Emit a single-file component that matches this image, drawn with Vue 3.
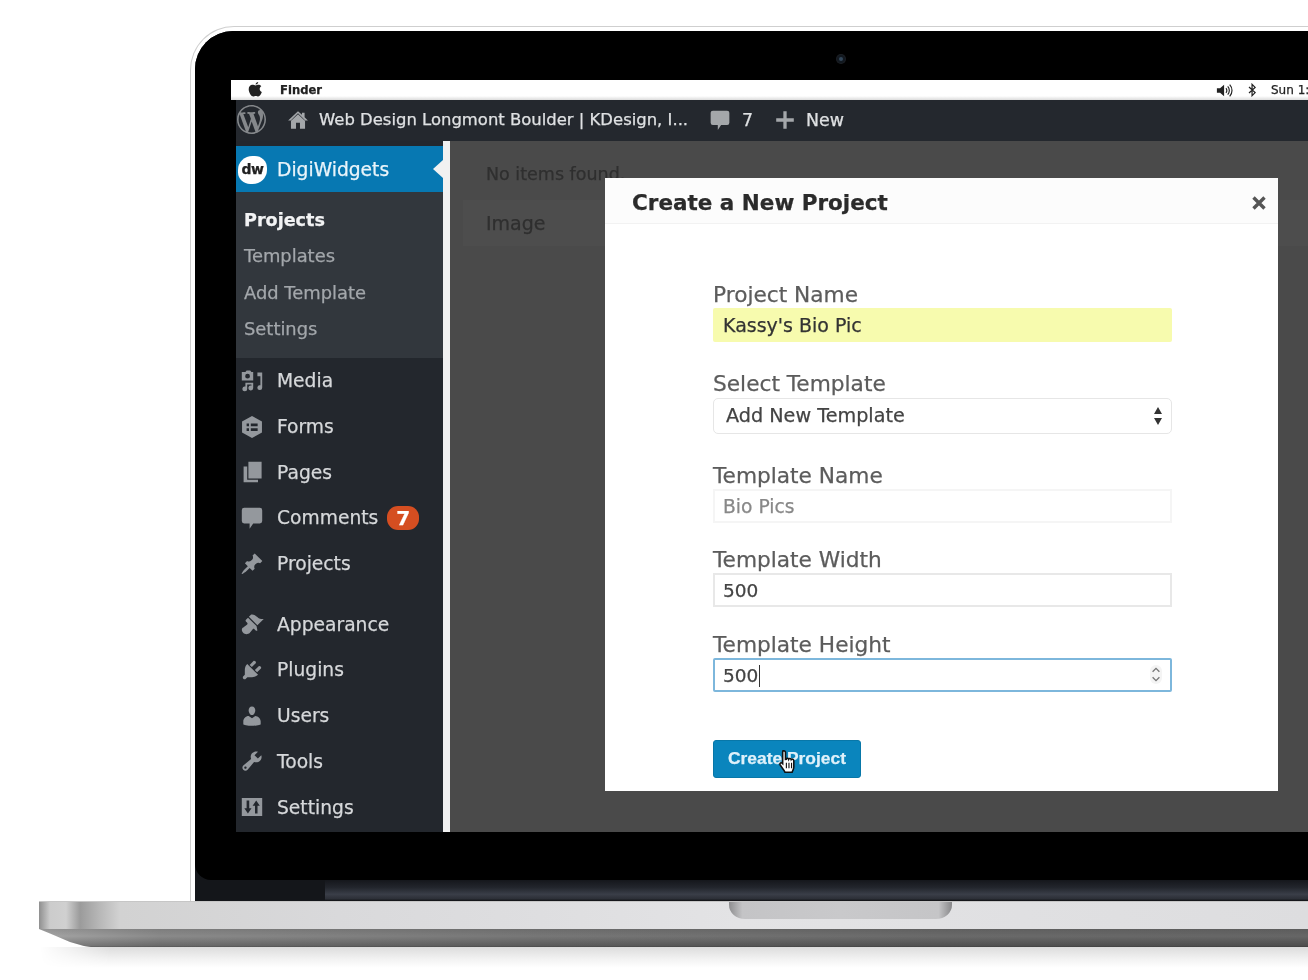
<script setup>
const adminIcons = {
  wp: 'M20 10c0-5.51-4.49-10-10-10C4.48 0 0 4.49 0 10c0 5.52 4.48 10 10 10 5.51 0 10-4.48 10-10zM7.78 15.37L4.37 6.22c.55-.02 1.17-.08 1.17-.08.5-.06.44-1.13-.06-1.11 0 0-1.45.11-2.37.11-.18 0-.37 0-.58-.01C4.12 2.69 6.87 1.11 10 1.11c2.33 0 4.45.87 6.05 2.34-.68-.11-1.65.39-1.65 1.58 0 .74.45 1.36.9 2.1.35.61.55 1.36.55 2.46 0 1.49-1.4 5-1.4 5l-3.03-8.37c.54-.02.82-.17.82-.17.5-.05.44-1.25-.06-1.22 0 0-1.44.12-2.38.12-.87 0-2.33-.12-2.33-.12-.5-.03-.56 1.2-.06 1.22l.92.08 1.26 3.41zM17.41 10c.24-.64.74-1.87.43-4.25.7 1.29 1.05 2.71 1.05 4.25 0 3.29-1.73 6.24-4.4 7.78.97-2.59 1.94-5.2 2.92-7.78zM6.1 18.09C3.12 16.65 1.11 13.53 1.11 10c0-1.3.23-2.48.72-3.59C3.25 10.3 4.67 14.2 6.1 18.09zm4.03-6.63l2.58 6.98c-.86.29-1.76.45-2.71.45-.79 0-1.57-.11-2.29-.33.81-2.38 1.62-4.74 2.42-7.1z',
  home: 'M10 2L1 10.5h2.6V18h4.6v-5.5h3.6V18h4.6v-7.5H19l-3-2.9V3.5h-2.4v1.8zM10 4.800l-6 5.700h-.6L10 3.800l6.600 6.700H16z',
  bubble: 'M3.500 1.500h13a2 2 0 0 1 2 2v9a2 2 0 0 1-2 2h-5.500L8 19v-4.500H3.500a2 2 0 0 1-2-2v-9a2 2 0 0 1 2-2z',
  plus: 'M8.500 2h3v6.500H18v3h-6.500V18h-3v-6.500H2v-3h6.500z'
}

const menuGroups = [
  [
    { label: 'Media', d: 'M3 2.500h1.500l1-1.300h3l1 1.300H11v7H1.500v-7zM6.300 4a2 2 0 1 0 0 4 2 2 0 0 0 0-4zM13 3h5.500v12.500a2 2 0 1 1-1.500-1.900V6h-2.500V3zM4.500 11.500h6.500v4.300a2 2 0 1 1-1.500-1.900v-.9H6v3.500a2 2 0 1 1-1.500-1.900z' },
    { label: 'Forms', d: 'M10 .8l8.300 4.600v9.200L10 19.200l-8.300-4.600V5.400zM5.500 7v2.300h2V7zm3.500 0v2.300h5.700V7zm-3.500 4v2.300h2V11zm3.500 0v2.300h5.700V11z' },
    { label: 'Pages', d: 'M7 1.500h11v14H7zM3 5.500h3v11h9v2H3z' },
    { label: 'Comments', d: adminIcons.bubble, badge: '7' },
    { label: 'Projects', d: 'M10.440 3.020l1.820-1.820 6.360 6.350-1.830 1.820c-1.050-.68-2.480-.57-3.410.36l-.75.75c-.92.93-1.040 2.350-.35 3.410l-1.830 1.820-2.410-2.410-2.800 2.790c-.42.42-3.380 2.710-3.800 2.290s1.860-3.390 2.280-3.810l2.790-2.790L4.100 9.360l1.830-1.820c1.050.69 2.480.57 3.400-.36l.75-.75c.93-.92 1.050-2.350.36-3.410z' }
  ],
  [
    { label: 'Appearance', d: 'M14.480 11.060L7.410 3.990l1.500-1.500c.5-.56 2.300-.47 3.510.32 1.210.8 1.430 1.280 2.910 2.100 1.180.64 2.450 1.260 4.450.85zm-.71.71L6.700 4.700 4.930 6.470c-.39.39-.39 1.020 0 1.410l1.060 1.060c.39.39.39 1.030 0 1.420-.6.6-1.430 1.110-2.210 1.690-.35.26-.7.53-1.010.84C1.430 13.230.9 15.600 2.640 17.340c1.750 1.750 4.120 1.200 5.460.16.3-.3.57-.65.83-1 .58-.78 1.090-1.610 1.690-2.210.39-.39 1.020-.39 1.410 0l1.060 1.060c.39.39 1.020.39 1.410 0z' },
    { label: 'Plugins', d: 'M13.110 4.360L9.870 7.600 8 5.730l3.240-3.240c.35-.34 1.050-.2 1.560.32.52.51.66 1.210.31 1.550zm-8 1.770l.91-1.120 9.010 9.010-1.190.84c-.71.71-2.630 1.160-3.820 1.160H6.140L4.900 17.260c-.59.59-1.540.59-2.120 0-.59-.58-.59-1.530 0-2.120l1.240-1.240v-3.880c0-1.130.4-3.190 1.090-3.890zm7.260 3.970l3.240-3.240c.34-.35 1.040-.21 1.550.31.52.51.66 1.210.31 1.550l-3.240 3.250z' },
    { label: 'Users', d: 'M10 9.250c-2.270 0-2.730-3.440-2.730-3.440C7 4.020 7.820 2 9.970 2c2.160 0 2.980 2.020 2.710 3.810 0 0-.41 3.440-2.68 3.440zm0 2.570L12.720 10c2.390 0 4.520 2.330 4.520 4.530v2.490s-3.650 1.130-7.240 1.130c-3.650 0-7.240-1.130-7.240-1.130v-2.490c0-2.250 1.940-4.480 4.470-4.480z' },
    { label: 'Tools', d: 'M16.680 9.770c-1.340 1.340-3.300 1.670-4.950.99l-5.410 6.520c-.99.99-2.590.99-3.580 0s-.99-2.590 0-3.570l6.520-5.420c-.68-1.650-.35-3.610.99-4.950 1.280-1.280 3.120-1.620 4.720-1.060l-2.890 2.890 2.820 2.820 2.860-2.870c.53 1.580.18 3.390-1.080 4.650zM3.810 16.210c.4.39 1.040.39 1.430 0 .4-.4.4-1.040 0-1.430-.39-.4-1.030-.4-1.430 0-.39.39-.39 1.030 0 1.430z' },
    { label: 'Settings', d: 'M1.500 2.500h17v15h-17zM5.500 4.500v6.500H3.600l3 4.500 3-4.500H7.700V4.500zm7 11v-6.500h-2l3-4.500 3 4.500h-1.900v6.500z' }
  ]
]

const submenu = ['Projects', 'Templates', 'Add Template', 'Settings']
</script>

<template>
  <main class="stage">
    <section class="lid">
      <div class="bezel">
        <div class="glass">
          <span class="camera"></span>
          <div class="screen">
            <header class="mac-bar">
              <svg class="apple" viewBox="0 0 20 20" aria-hidden="true">
                <path d="M13.600 1c.1 1.300-1.200 3-2.900 2.900C10.500 2.500 12 1 13.600 1zM10.700 5c.9 0 1.900-.8 3.300-.8 1.100 0 2.300.6 3 1.600-2.700 1.600-2.200 5.400.6 6.500-.7 1.900-2.300 5-4 5-1 0-1.500-.7-2.700-.7-1.300 0-1.800.7-2.800.7C6 17.300 3 13 3 9.200 3 6 5 4.300 7 4.300c1.400 0 2.800.7 3.700.7z"/>
              </svg>
              <strong class="finder">Finder</strong>
              <div class="mac-right">
                <svg class="speaker" viewBox="0 0 20 16" aria-hidden="true">
                  <path d="M1 5.500h3.500L9 1.500v13l-4.500-4H1z" fill="#222"/>
                  <path d="M11 5.500a3.500 3.500 0 0 1 0 5M13 3.500a6.500 6.500 0 0 1 0 9M15.200 1.500a9.500 9.500 0 0 1 0 13" fill="none" stroke="#222" stroke-width="1.300"/>
                </svg>
                <svg class="bluetooth" viewBox="0 0 10 16" aria-hidden="true">
                  <path d="M1 4.500l7 6.500-3.500 3.500v-13L8 5 1 11.500" fill="none" stroke="#222" stroke-width="1.400"/>
                </svg>
                <span class="clock">Sun 1:30 PM</span>
              </div>
            </header>

            <div class="browser">
              <nav class="admin-bar">
                <svg class="wp-logo" viewBox="0 0 20 20" aria-hidden="true"><path :d="adminIcons.wp"/></svg>
                <svg class="bar-icon home" viewBox="0 0 20 20" aria-hidden="true"><path fill-rule="evenodd" :d="adminIcons.home"/></svg>
                <span class="site-name">Web Design Longmont Boulder | KDesign, I...</span>
                <svg class="bar-icon bubble" viewBox="0 0 20 20" aria-hidden="true"><path :d="adminIcons.bubble"/></svg>
                <span class="bar-count">7</span>
                <svg class="bar-icon plus" viewBox="0 0 20 20" aria-hidden="true"><path :d="adminIcons.plus"/></svg>
                <span class="bar-new">New</span>
              </nav>

              <div class="wp-body">
                <aside class="sidebar">
                  <div class="current">
                    <span class="dw-logo">dw</span>
                    <span class="current-name">DigiWidgets</span>
                  </div>
                  <ul class="submenu">
                    <li v-for="(item, i) in submenu" :key="item" :class="{ active: i === 0 }">{{ item }}</li>
                  </ul>
                  <ul v-for="(group, g) in menuGroups" :key="g" class="menu">
                    <li v-for="item in group" :key="item.label" class="menu-row">
                      <svg class="menu-icon" viewBox="0 0 20 20" aria-hidden="true"><path fill-rule="evenodd" :d="item.d"/></svg>
                      <span>{{ item.label }}</span>
                      <b v-if="item.badge" class="badge">{{ item.badge }}</b>
                    </li>
                  </ul>
                </aside>
                <div class="divider"></div>
                <div class="content">
                  <div class="list">
                    <p class="empty">No items found.</p>
                    <p class="col">Image</p>
                  </div>

                  <section class="modal">
                    <header class="modal-head">
                      <h2>Create a New Project</h2>
                      <svg class="close" viewBox="0 0 16 16" aria-hidden="true">
                        <path d="M2.500 2.500l11 11M13.500 2.500l-11 11" stroke="#555" stroke-width="3.400" fill="none"/>
                      </svg>
                    </header>
                    <form class="form">
                      <div class="field f1">
                        <label>Project Name</label>
                        <div class="input yellow">Kassy's Bio Pic</div>
                      </div>
                      <div class="field f2">
                        <label>Select Template</label>
                        <div class="input select">
                          Add New Template
                          <svg class="arrows" viewBox="0 0 10 18" aria-hidden="true">
                            <path d="M5 0l4 7H1zM5 18l-4-7h8z" fill="#333"/>
                          </svg>
                        </div>
                      </div>
                      <div class="field f3">
                        <label>Template Name</label>
                        <div class="input disabled">Bio Pics</div>
                      </div>
                      <div class="field f4">
                        <label>Template Width</label>
                        <div class="input plain">500</div>
                      </div>
                      <div class="field f5">
                        <label>Template Height</label>
                        <div class="input focus">
                          500<i class="caret"></i>
                          <span class="spinner">
                            <svg viewBox="0 0 8 14" aria-hidden="true"><path d="M1.500 5L4 2.500 6.500 5M1.500 9L4 11.500 6.500 9" stroke="#777" fill="none"/></svg>
                          </span>
                        </div>
                      </div>
                      <div class="submit">
                        Create Project
                        <svg class="hand" viewBox="0 0 20 24" aria-hidden="true">
                          <path d="M6.500 2.500c1 0 1.700.7 1.700 1.600v6l.7-.1c0-1 1.700-1.200 2.100 0 .3-.9 2-.9 2.300.3.500-.7 2.200-.4 2.300 1v5.500c0 2-1 3.200-1.500 4.700H7.800c-.6-1.700-2.800-4-4.300-6.400-.7-1.200.3-2.300 1.400-1.800l.8.700V4.100c0-.9.300-1.600.3-1.600z" fill="#fff" stroke="#111" stroke-width="1.400"/>
                          <path d="M9 13v5M11.300 13v5M13.600 13v5" stroke="#111" stroke-width="1"/>
                        </svg>
                      </div>
                    </form>
                  </section>
                </div>
              </div>
            </div>
          </div>
        </div>
        <div class="chin"><div class="chin-light"></div></div>
      </div>
    </section>

    <section class="base">
      <div class="deck"><div class="notch"></div></div>
      <div class="front"></div>
    </section>
    <div class="ground"></div>
  </main>
</template>

<style>
html, body { margin: 0; background: #fff; }
</style>

<style scoped>
.stage {
  width: 1308px;
  height: 980px;
  overflow: hidden;
  background: #fff;
  font-family: "DejaVu Sans", Verdana, sans-serif;
  position: relative;
}
p, h2, ul { margin: 0; padding: 0; }
ul { list-style: none; }

/* lid */
.lid {
  box-sizing: border-box;
  width: 1302px;
  height: 875px;
  margin: 26px 0 0 190px;
  padding: 4px 4px 0;
  border: 1px solid #cfcfcf;
  border-bottom: 0;
  border-radius: 44px 44px 0 0;
}
.bezel {
  height: 870px;
  background: #14161a;
  border-radius: 38px 38px 0 0;
  display: flex;
  flex-direction: column;
}
.glass {
  height: 849px;
  box-sizing: border-box;
  padding: 49px 0 0 36px;
  background: #000;
  border-radius: 38px 38px 0 16px;
  position: relative;
}
.camera {
  position: absolute;
  left: 644px;
  top: 26px;
  width: 4px;
  height: 4px;
  border-radius: 50%;
  background: #33475a;
  box-shadow: 0 0 0 2px #12181f, 0 0 0 3px #1c1f24;
}
.chin { height: 21px; padding-left: 130px; }
.chin-light {
  height: 100%;
  background: linear-gradient(#15171c 0%, #22252c 35%, #3a3e48 68%, #2c2f37 90%, #0e0f12 100%);
}

/* screen */
.screen {
  width: 1220px;
  height: 752px;
  background: #000;
  filter: blur(0.55px);
  -webkit-text-stroke: 0.25px;
}
.mac-bar {
  height: 20px;
  background: linear-gradient(#fff 80%, #dcdcdc);
  display: flex;
  align-items: center;
  color: #222;
  font-size: 12px;
}
.apple { width: 18px; height: 18px; margin-left: 15px; fill: #222; }
.finder { margin-left: 16px; font-weight: 700; font-size: 11.600px; }
.mac-right { margin-left: auto; width: 235px; display: flex; align-items: center; }
.speaker { width: 18px; height: 15px; }
.bluetooth { width: 9px; height: 14px; margin-left: 14px; }
.clock { margin-left: 14px; white-space: nowrap; }

.browser { margin-left: 5px; height: 732px; display: flex; flex-direction: column; }
.admin-bar {
  height: 41px;
  box-sizing: border-box;
  padding-bottom: 2px;
  flex: none;
  display: flex;
  align-items: center;
  background: #24282e;
  color: #dfe1e3;
  font-size: 17.400px;
}
.wp-logo { width: 29px; height: 29px; margin-left: 1px; fill: #85888b; flex: none; }
.bar-icon { fill: #a4a7aa; width: 22px; height: 22px; flex: none; }
.home { margin-left: 21px; }
.site-name { margin-left: 10px; width: 390px; flex: none; white-space: nowrap; font-size: 16.450px; }
.bar-count { margin-left: 11px; }
.plus { margin-left: 21px; }
.bar-new { margin-left: 10px; }

.wp-body { flex: 1; display: flex; min-height: 0; }
.sidebar {
  width: 207px;
  flex: none;
  box-sizing: border-box;
  padding-top: 5px;
  background: #23272d;
}
.current {
  height: 46px;
  background: #0778b2;
  color: #e9f4fa;
  font-size: 18.700px;
  display: flex;
  align-items: center;
  position: relative;
}
.current::after {
  content: "";
  position: absolute;
  right: 0;
  top: 14px;
  border: 9px solid transparent;
  border-right: 10px solid #f1f1f1;
  border-left: 0;
}
.dw-logo {
  width: 29px;
  height: 28px;
  margin: 2px 0 0 2px;
  border-radius: 50% 42% 50% 42%;
  background: #fff;
  color: #222;
  font-size: 14px;
  font-weight: 700;
  line-height: 26px;
  text-align: center;
  letter-spacing: -0.5px;
}
.current-name { margin-left: 10px; }
.submenu {
  box-sizing: border-box;
  height: 166px;
  padding: 10px 0 0 8px;
  background: #32373d;
  color: #a3a7ab;
  font-size: 17.900px;
}
.submenu li { height: 36.400px; line-height: 36.400px; }
.submenu .active { color: #f2f3f4; font-weight: 700; font-size: 17.600px; }
.menu { color: #d6d8da; font-size: 18.700px; }
.menu + .menu { margin-top: 15px; }
.menu-row {
  height: 45.700px;
  display: flex;
  align-items: center;
  padding-left: 4px;
}
.menu-icon { width: 24px; height: 24px; margin-right: 13px; fill: #94989d; flex: none; }
.badge {
  width: 32px;
  height: 24px;
  margin-left: 9px;
  border-radius: 11px;
  background: #d54e21;
  color: #fff;
  font-size: 20px;
  line-height: 24px;
  text-align: center;
}
.divider { width: 7px; flex: none; background: #f1f1f1; }

.content {
  flex: 1;
  background: #4a4a4a;
  position: relative;
  color: #2f2f2f;
  font-size: 17.500px;
}
.list { margin-left: 13px; padding: 22px 0 0 23px; }
.empty { height: 37px; line-height: 22px; white-space: nowrap; }
.col {
  height: 46px;
  line-height: 46px;
  margin-left: -23px;
  padding-left: 23px;
  background: #4d4d4d;
  font-size: 19px;
}

.modal {
  position: absolute;
  left: 155px;
  top: 37px;
  width: 673px;
  height: 613px;
  background: #fff;
  color: #555;
}
.modal-head {
  box-sizing: border-box;
  height: 46px;
  padding: 5px 11px 0 27px;
  display: flex;
  align-items: center;
  justify-content: space-between;
  background: #fcfcfc;
  border-bottom: 1px solid #f2f2f2;
}
.modal-head h2 { color: #2b2b2b; font-size: 21.500px; font-weight: 700; line-height: 1; }
.close { width: 16px; height: 16px; }

.form { box-sizing: border-box; padding: 59px 0 0 108px; width: 567px; }
.field { display: flex; flex-direction: column; }
.field label { height: 25px; line-height: 24px; font-size: 21.700px; color: #5c5c5c; white-space: nowrap; }
.f1 { margin-bottom: 30px; }
.f2 { margin-bottom: 31px; }
.f3 { margin-bottom: 25px; }
.f4 { margin-bottom: 26px; }
.f5 { margin-bottom: 48px; }
.input {
  box-sizing: border-box;
  height: 34px;
  padding-left: 10px;
  line-height: 34px;
  font-size: 19px;
  color: #444;
  border-radius: 2px;
  position: relative;
}
.yellow { background: #f7fbae; color: #333; }
.select { height: 36px; margin-top: 1px; margin-bottom: -1px; padding-left: 12px; line-height: 34px; border: 1px solid #e6e6e6; border-radius: 5px; font-size: 19.200px; }
.disabled { border: 2px solid #f5f5f5; color: #888; line-height: 31px; padding-left: 8px; font-size: 18.700px; border-radius: 0; }
.plain { border: 2px solid #e8e8e8; line-height: 31px; padding-left: 8px; border-radius: 0; font-size: 18.500px; }
.focus { border: 2px solid #7db7dc; line-height: 31px; padding-left: 8px; font-size: 18.500px; }
.arrows { position: absolute; right: 8px; top: 8px; width: 10px; height: 18px; }
.caret { display: inline-block; width: 1px; height: 22px; margin-left: 1px; background: #333; vertical-align: -5px; }
.spinner {
  position: absolute;
  right: 8px;
  top: 5px;
  width: 12px;
  height: 19px;
  border-radius: 6px;
  background: #f4f4f4;
  display: flex;
}
.spinner svg { width: 100%; height: 100%; }
.submit {
  width: 148px;
  height: 38px;
  box-sizing: border-box;
  border-radius: 3px;
  background: #0a85bd;
  border: 1px solid #0877a8;
  color: #dff1fa;
  font-family: "Liberation Sans", Arial, sans-serif;
  font-size: 17.400px;
  font-weight: 700;
  line-height: 34px;
  text-align: center;
  position: relative;
}
.hand { position: absolute; left: 62px; top: 7px; width: 23px; height: 27px; }

/* base */
.base { width: 100%; }
.deck {
  height: 28px;
  margin-left: 39px;
  border-top: 1px solid #c6c6c6;
  box-sizing: border-box;
  background:
    linear-gradient(90deg, #8f8f8f 0, #cccccc 11px, #d0d0d0 27px, #9b9b9b 41px, #b8b8b8 61px, #d2d2d2 81px, #d9d9db 300px, #e3e3e5 700px, #dddddf 100%);
  position: relative;
}
.notch {
  position: absolute;
  left: 690px;
  top: 0;
  width: 223px;
  height: 17px;
  border-radius: 0 0 16px 16px / 0 0 14px 14px;
  background: linear-gradient(90deg, #8e8e90, #c4c4c6 6%, #c9c9cb 50%, #c5c5c7 94%, #88888a);
}
.front {
  height: 18px;
  margin-left: 39px;
  background:
    linear-gradient(#00000018, #0000 40%, #00000040 95%, #00000070),
    linear-gradient(90deg, #a5a5a5 0, #8a8a8a 120px, #777 500px, #6a6a6a 900px, #666 100%);
  clip-path: polygon(0 0, 100% 0, 100% 100%, 52px 100%, 45px 17px, 31px 13px, 11px 4.500px, 0 0);
}
.ground {
  height: 28px;
  margin-left: 40px;
  background: linear-gradient(#dcdcdc, #f3f3f3 45%, #fff 75%);
  -webkit-mask-image: linear-gradient(90deg, transparent 0, #000 70px);
  mask-image: linear-gradient(90deg, transparent 0, #000 70px);
}
</style>
